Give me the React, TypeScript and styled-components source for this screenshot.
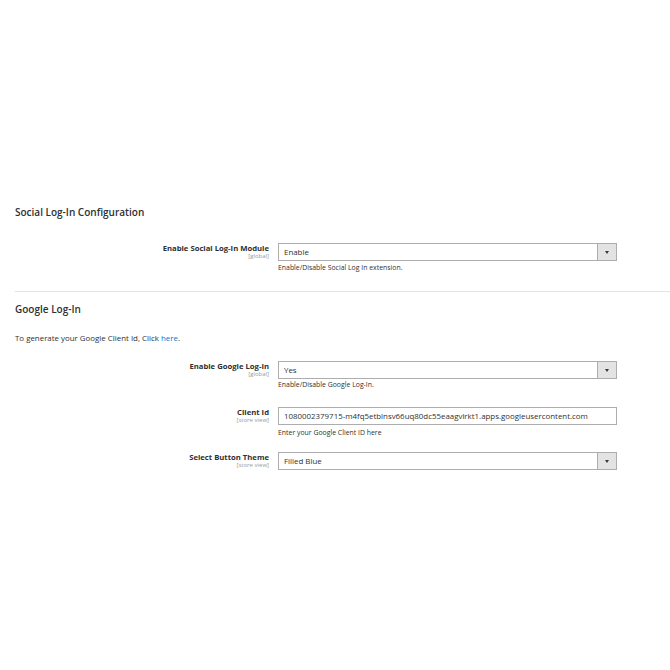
import React from "react";
import styled, { createGlobalStyle } from "styled-components";

const Global = createGlobalStyle`
  html, body { margin: 0; padding: 0; background: #fff; }
  body {
    font-family: "Open Sans", "Liberation Sans", sans-serif;
    color: #303030;
    -webkit-font-smoothing: antialiased;
  }
  * { box-sizing: border-box; }
`;

const Page = styled.div`
  width: 670px;
  height: 670px;
  padding: 200px 0 0 15px;
  overflow: hidden;
`;

const Heading = styled.h2<{ $top?: number }>`
  margin: ${(p) => p.$top ?? 0}px 0 0 0;
  font-size: 10px;
  font-weight: 600;
  line-height: 24px;
  height: 24px;
  color: #303030;
`;

const Divider = styled.hr<{ $top: number }>`
  margin: ${(p) => p.$top}px 0 0 0;
  border: 0;
  border-top: 1px solid #e3e3e3;
  height: 0;
`;

const Intro = styled.p<{ $top: number }>`
  margin: ${(p) => p.$top}px 0 0 0;
  font-size: 7.9px;
  line-height: 10px;
  height: 10px;
`;

const Link = styled.a`
  color: #007bdb;
  text-decoration: none;
`;

const Row = styled.div<{ $top: number }>`
  display: grid;
  grid-template-columns: 254px 339px;
  column-gap: 9px;
  margin-top: ${(p) => p.$top}px;
`;

const LabelCol = styled.div`
  display: flex;
  flex-direction: column;
  align-items: flex-end;
`;

const Label = styled.span`
  font-size: 7.7px;
  font-weight: 700;
  line-height: 10px;
  color: #303030;
`;

const Scope = styled.span`
  font-size: 6px;
  line-height: 7px;
  color: #9a9a9a;
`;

const ControlCol = styled.div`
  display: flex;
  flex-direction: column;
`;

const Field = styled.div`
  height: 18px;
  border: 1px solid #adadad;
  display: flex;
  align-items: stretch;
  background: #fff;
`;

const Value = styled.span`
  flex: 1;
  padding-left: 5px;
  font-size: 7.9px;
  line-height: 16px;
  color: #303030;
  white-space: nowrap;
  overflow: hidden;
`;

const ArrowBtn = styled.span`
  width: 19px;
  border-left: 1px solid #adadad;
  background: #e3e3e3;
  display: flex;
  align-items: center;
  justify-content: center;
`;

const Arrow = styled.span`
  width: 0;
  height: 0;
  border-left: 2.5px solid transparent;
  border-right: 2.5px solid transparent;
  border-top: 3px solid #41362f;
`;

const Help = styled.div<{ $top: number }>`
  margin-top: ${(p) => p.$top}px;
  font-size: 6.9px;
  line-height: 8px;
  color: #303030;
`;

type RowProps = {
  top: number;
  label: string;
  scope: string;
  value: string;
  select?: boolean;
  help?: string;
  helpTop?: number;
};

const FieldRow = ({ top, label, scope, value, select, help, helpTop = 3 }: RowProps) => (
  <Row $top={top}>
    <LabelCol>
      <Label>{label}</Label>
      <Scope>{scope}</Scope>
    </LabelCol>
    <ControlCol>
      <Field>
        <Value>{value}</Value>
        {select && (
          <ArrowBtn>
            <Arrow />
          </ArrowBtn>
        )}
      </Field>
      {help && <Help $top={helpTop}>{help}</Help>}
    </ControlCol>
  </Row>
);

export default function App() {
  return (
    <>
      <Global />
      <Page>
        <Heading>Social Log-In Configuration</Heading>
        <FieldRow
          top={19}
          label="Enable Social Log-In Module"
          scope="[global]"
          value="Enable"
          select
          help="Enable/Disable Social Log In extension."
        />
        <Divider $top={19} />
        <Heading $top={5}>Google Log-In</Heading>
        <Intro $top={12}>
          To generate your Google Client Id, Click <Link href="#">here</Link>.
        </Intro>
        <FieldRow
          top={18}
          label="Enable Google Log-In"
          scope="[global]"
          value="Yes"
          select
          help="Enable/Disable Google Log-In."
          helpTop={2}
        />
        <FieldRow
          top={18}
          label="Client Id"
          scope="[store view]"
          value="1080002379715-m4fq5etblnsv66uq80dc55eaagvlrkt1.apps.googleusercontent.com"
          help="Enter your Google Client ID here"
          helpTop={4}
        />
        <FieldRow
          top={15}
          label="Select Button Theme"
          scope="[store view]"
          value="Filled Blue"
          select
        />
      </Page>
    </>
  );
}
